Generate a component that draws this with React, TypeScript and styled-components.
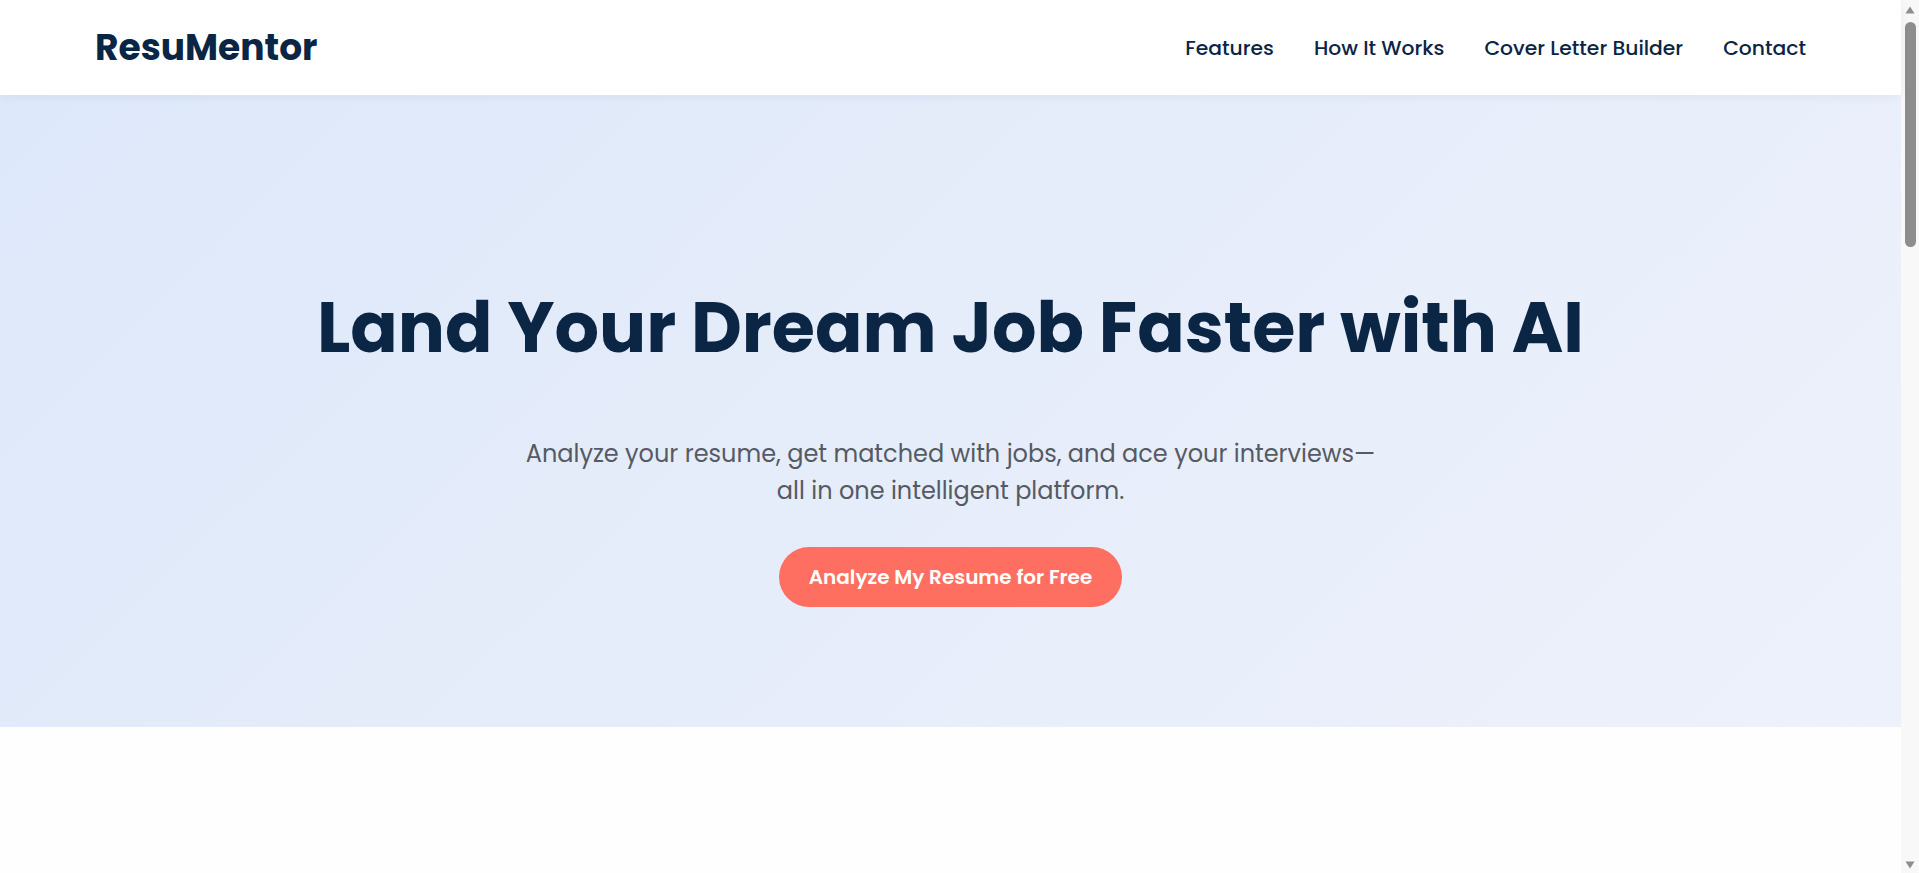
import React from "react";
import styled, { createGlobalStyle } from "styled-components";

const GlobalStyle = createGlobalStyle`
  * { box-sizing: border-box; }
  html, body { margin: 0; padding: 0; }
  body {
    background: #fefefe;
    font-family: "Poppins", "Open Sans", "Noto Sans", sans-serif;
    color: #0b2545;
  }
`;

const Shell = styled.div`
  display: flex;
  align-items: flex-start;
`;

const Page = styled.div`
  flex: 1;
  min-width: 0;
`;

const ScrollRail = styled.div`
  position: sticky;
  top: 0;
  flex: 0 0 18px;
  height: 100vh;
  display: flex;
  flex-direction: column;
  align-items: center;
  background: #f8f8f8;
  padding: 6px 0 4px;
`;

const RailArrow = styled.svg`
  flex: 0 0 auto;
  display: block;
`;

const Thumb = styled.div`
  margin-top: 8px;
  width: 11px;
  height: 225px;
  border-radius: 6px;
  background: #8d8d8d;
`;

const RailSpacer = styled.div`
  flex: 1;
`;

const Header = styled.header`
  position: sticky;
  top: 0;
  z-index: 10;
  height: 95px;
  padding: 0 5%;
  display: flex;
  align-items: center;
  justify-content: space-between;
  background: #ffffff;
  box-shadow: 0 2px 10px rgba(15, 40, 80, 0.05);
`;

const Logo = styled.a`
  font-family: "Poppins", "Open Sans", sans-serif;
  font-weight: 700;
  font-size: 36px;
  color: #0b2545;
  text-decoration: none;
`;

const Nav = styled.nav`
  display: flex;
  align-items: center;
  gap: 40px;
`;

const NavLink = styled.a`
  font-family: "Poppins", "Open Sans", sans-serif;
  font-weight: 500;
  font-size: 20.3px;
  color: #0b2545;
  text-decoration: none;
`;

const Hero = styled.section`
  padding: 191px 5% 120px;
  background: linear-gradient(135deg, #dde8fa 0%, #e6edfa 50%, #edf1fb 100%);
  display: flex;
  flex-direction: column;
  align-items: center;
  text-align: center;
`;

const Title = styled.h1`
  margin: 0;
  font-family: "Poppins", "Open Sans", sans-serif;
  font-weight: 700;
  font-size: 70px;
  line-height: 84px;
  color: #0b2545;
`;

const Subtitle = styled.p`
  margin: 65px 0 0;
  font-family: "Poppins", "Open Sans", sans-serif;
  font-weight: 400;
  font-size: 24px;
  line-height: 37px;
  color: #555a63;
`;

const CTA = styled.a`
  margin-top: 38px;
  height: 60px;
  padding: 0 30px;
  display: inline-flex;
  align-items: center;
  justify-content: center;
  border-radius: 30px;
  background: #ff6f61;
  color: #ffffff;
  font-family: "Poppins", "Open Sans", sans-serif;
  font-weight: 600;
  font-size: 20px;
  text-decoration: none;
`;

const Section = styled.section`
  padding: 160px 5% 100px;
  display: flex;
  flex-direction: column;
  align-items: center;
  background: #fefefe;
`;

const SectionTitle = styled.h2`
  margin: 0 0 48px;
  font-size: 40px;
  font-weight: 700;
  color: #0b2545;
`;

const CardGrid = styled.div`
  width: 100%;
  max-width: 1200px;
  display: grid;
  grid-template-columns: repeat(3, 1fr);
  gap: 32px;
`;

const Card = styled.div`
  padding: 40px 32px;
  min-height: 260px;
  border-radius: 16px;
  background: #ffffff;
  box-shadow: 0 6px 24px rgba(15, 40, 80, 0.06);
`;

const CardTitle = styled.h3`
  margin: 0 0 12px;
  font-size: 22px;
  font-weight: 600;
  color: #0b2545;
`;

const CardText = styled.p`
  margin: 0;
  font-size: 16px;
  line-height: 1.7;
  color: #555a63;
`;

const Footer = styled.footer`
  padding: 40px 5%;
  text-align: center;
  font-size: 14px;
  color: #8a93a3;
  background: #fefefe;
`;

const features = [
  { t: "AI Resume Analysis", d: "Get instant, detailed feedback on your resume's strengths and weaknesses." },
  { t: "Smart Job Matching", d: "Discover roles that fit your skills and experience, ranked by relevance." },
  { t: "Interview Prep", d: "Practice with tailored questions and receive actionable coaching." },
];

const steps = [
  { t: "1. Upload", d: "Upload your resume in PDF or DOCX format." },
  { t: "2. Analyze", d: "Our AI reviews every section and scores your resume." },
  { t: "3. Improve", d: "Apply suggestions and get matched with the right jobs." },
];

export default function App() {
  return (
    <>
      <GlobalStyle />
      <Shell>
        <Page>
          <Header>
            <Logo href="#">ResuMentor</Logo>
            <Nav>
              <NavLink href="#features">Features</NavLink>
              <NavLink href="#how">How It Works</NavLink>
              <NavLink href="#cover">Cover Letter Builder</NavLink>
              <NavLink href="#contact">Contact</NavLink>
            </Nav>
          </Header>
          <Hero>
            <Title>Land Your Dream Job Faster with AI</Title>
            <Subtitle>
              Analyze your resume, get matched with jobs, and ace your interviews—
              <br />
              all in one intelligent platform.
            </Subtitle>
            <CTA href="#">Analyze My Resume for Free</CTA>
          </Hero>
          <Section id="features">
            <SectionTitle>Features</SectionTitle>
            <CardGrid>
              {features.map((f) => (
                <Card key={f.t}>
                  <CardTitle>{f.t}</CardTitle>
                  <CardText>{f.d}</CardText>
                </Card>
              ))}
            </CardGrid>
          </Section>
          <Section id="how">
            <SectionTitle>How It Works</SectionTitle>
            <CardGrid>
              {steps.map((f) => (
                <Card key={f.t}>
                  <CardTitle>{f.t}</CardTitle>
                  <CardText>{f.d}</CardText>
                </Card>
              ))}
            </CardGrid>
          </Section>
          <Section id="contact">
            <SectionTitle>Contact</SectionTitle>
            <CardText>Questions? Reach us at hello@resumentor.ai</CardText>
          </Section>
          <Footer>© 2025 ResuMentor. All rights reserved.</Footer>
        </Page>
        <ScrollRail aria-hidden="true">
          <RailArrow width="10" height="8" viewBox="0 0 10 8">
            <polygon points="5,0.5 9.5,7.5 0.5,7.5" fill="#8d8d8d" />
          </RailArrow>
          <Thumb />
          <RailSpacer />
          <RailArrow width="10" height="8" viewBox="0 0 10 8">
            <polygon points="0.5,0.5 9.5,0.5 5,7.5" fill="#8d8d8d" />
          </RailArrow>
        </ScrollRail>
      </Shell>
    </>
  );
}
